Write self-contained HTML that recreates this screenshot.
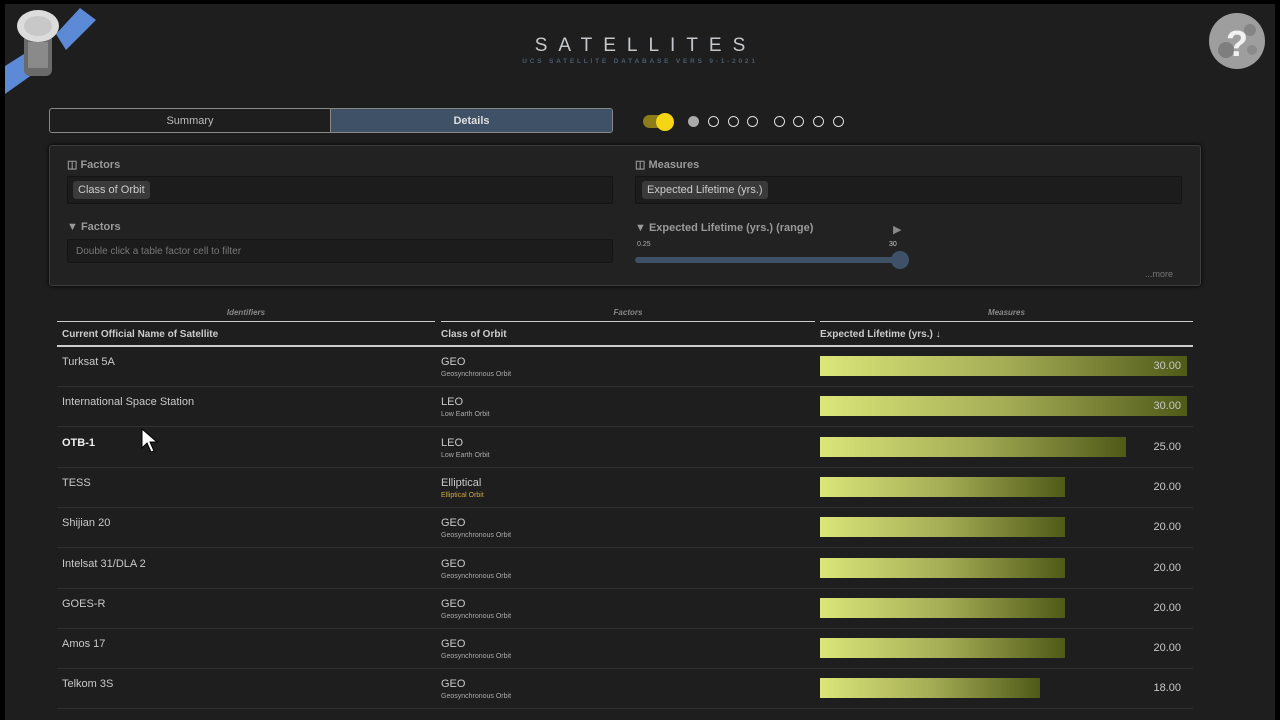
<!DOCTYPE html>
<html><head><meta charset="utf-8"><style>
*{box-sizing:border-box;margin:0;padding:0}
body{width:1280px;height:720px;background:#000;font-family:"Liberation Sans",sans-serif;overflow:hidden;position:relative}
#pg{position:absolute;left:5px;top:4px;width:1270px;height:716px;background:#1e1e1e}
.a{position:absolute}
.t{color:#c9c9c9;font-size:11px}
.pill{background:#3a3a3a;border-radius:3px;padding:3px 5px;color:#ccc;font-size:11px}
.box{border:1px solid #151515;background:#1c1c1c;border-radius:2px}
.lbl{color:#9a9a9a;font-size:11px;font-weight:bold}
.bar{position:absolute;height:20px;background:linear-gradient(90deg,#dbe67a,#a5ad55 50%,#4f5a18)}
.row{position:absolute;left:52px;width:1136px;height:40px;border-bottom:1px solid #303030}
.dot{position:absolute;width:11px;height:11px;border-radius:50%;border:1.5px solid #ddd;top:116px}
</style></head><body><div id="pg"></div>
<!-- satellite -->
<svg class="a" style="left:4px;top:4px" width="92" height="90"><polygon points="52,30 76,4 92,16 62,46" fill="#5c8ad6"/><polygon points="1,62 20,50 32,68 1,90" fill="#5c8ad6"/><rect x="20" y="30" width="28" height="42" rx="6" fill="#6a6a6a"/><rect x="24" y="38" width="20" height="26" fill="#8a8a8a"/><ellipse cx="34" cy="22" rx="21" ry="16" fill="#dcdcdc"/><ellipse cx="34" cy="22" rx="14" ry="10" fill="#c8c8c8"/></svg>
<!-- moon -->
<svg class="a" style="left:1208px;top:12px" width="58" height="58"><circle cx="29" cy="29" r="28" fill="#9e9e9e"/><circle cx="18" cy="38" r="8" fill="#7e7e7e"/><circle cx="42" cy="18" r="6" fill="#858585"/><circle cx="44" cy="38" r="5" fill="#8a8a8a"/><text x="29" y="44" text-anchor="middle" font-size="36" font-weight="bold" fill="#f2f2f2" font-family="Liberation Sans">?</text></svg>
<div class="a" style="left:0;width:1280px;top:35px;text-align:center;color:#c4c8cc;font-size:19px;letter-spacing:11px;padding-left:11px">SATELLITES</div>
<div class="a" style="left:0;width:1280px;top:58px;text-align:center;color:#4d5a6a;font-size:6.5px;letter-spacing:2.8px;font-weight:bold">UCS SATELLITE DATABASE VERS 9-1-2021</div>
<!-- tabs -->
<div class="a" style="left:49px;top:108px;width:564px;height:25px;border:1px solid #888;border-radius:3px;overflow:hidden;display:flex">
<div style="width:281px;border-right:1px solid #888;text-align:center;line-height:24px;color:#bbb;font-size:11px">Summary</div>
<div style="flex:1;background:#3e5166;text-align:center;line-height:24px;color:#ddd;font-size:11px;font-weight:bold">Details</div></div>
<div class="a" style="left:643px;top:115px;width:28px;height:13px;border-radius:7px;background:#8d7d1a"></div>
<div class="a" style="left:656px;top:113px;width:18px;height:18px;border-radius:50%;background:#f5d514"></div>
<div class="dot" style="left:688px;background:#aaa;border-color:#aaa"></div>
<div class="dot" style="left:708px"></div><div class="dot" style="left:728px"></div><div class="dot" style="left:747px"></div>
<div class="dot" style="left:774px"></div><div class="dot" style="left:793px"></div><div class="dot" style="left:813px"></div><div class="dot" style="left:833px"></div>
<!-- panel -->
<div class="a" style="left:49px;top:145px;width:1152px;height:141px;background:#222;border:1px solid #3d3d3d;border-radius:3px;box-shadow:0 0 4px #000"></div>
<div class="a lbl" style="left:67px;top:158px">&#9707; Factors</div>
<div class="a box" style="left:67px;top:176px;width:546px;height:28px"></div>
<div class="a pill" style="left:73px;top:181px">Class of Orbit</div>
<div class="a lbl" style="left:67px;top:221px">&#9660; Factors</div>
<div class="a box" style="left:67px;top:239px;width:546px;height:24px"></div>
<div class="a" style="left:76px;top:246px;color:#777;font-size:10px">Double click a table factor cell to filter</div>
<div class="a lbl" style="left:635px;top:158px">&#9707; Measures</div>
<div class="a box" style="left:635px;top:176px;width:547px;height:28px"></div>
<div class="a pill" style="left:642px;top:181px">Expected Lifetime (yrs.)</div>
<div class="a lbl" style="left:635px;top:222px">&#9660; Expected Lifetime (yrs.) (range)</div>
<div class="a" style="left:893px;top:223px;color:#888;font-size:11px">&#9654;</div>
<div class="a" style="left:637px;top:241px;color:#aaa;font-size:7px">0.25</div>
<div class="a" style="left:889px;top:241px;color:#ccc;font-size:7px">30</div>
<div class="a" style="left:635px;top:257px;width:266px;height:6px;border-radius:3px;background:#3e5166"></div>
<div class="a" style="left:891px;top:251px;width:18px;height:18px;border-radius:50%;background:#3e5166"></div>
<div class="a" style="left:1145px;top:269px;color:#777;font-size:9px">...more</div>
<!-- table headers -->
<div class="a" style="left:57px;top:308px;width:378px;text-align:center;color:#888;font-size:8px;font-style:italic;font-weight:bold">Identifiers</div>
<div class="a" style="left:441px;top:308px;width:374px;text-align:center;color:#888;font-size:8px;font-style:italic;font-weight:bold">Factors</div>
<div class="a" style="left:820px;top:308px;width:373px;text-align:center;color:#888;font-size:8px;font-style:italic;font-weight:bold">Measures</div>
<div class="a" style="left:57px;top:321px;width:378px;height:1px;background:#ccc"></div>
<div class="a" style="left:441px;top:321px;width:374px;height:1px;background:#ccc"></div>
<div class="a" style="left:820px;top:321px;width:373px;height:1px;background:#ccc"></div>
<div class="a" style="left:62px;top:329px;color:#ccc;font-size:10px;font-weight:bold">Current Official Name of Satellite</div>
<div class="a" style="left:441px;top:329px;color:#ccc;font-size:10px;font-weight:bold">Class of Orbit</div>
<div class="a" style="left:820px;top:329px;color:#ccc;font-size:10px;font-weight:bold">Expected Lifetime (yrs.) ↓</div>
<div class="a" style="left:57px;top:345px;width:1136px;height:2px;background:#ccc"></div>
<div id="rows"></div>
<script>
var d=[["Turksat 5A","GEO","Geosynchronous Orbit",30],["International Space Station","LEO","Low Earth Orbit",30],["OTB-1","LEO","Low Earth Orbit",25],["TESS","Elliptical","Elliptical Orbit",20],["Shijian 20","GEO","Geosynchronous Orbit",20],["Intelsat 31/DLA 2","GEO","Geosynchronous Orbit",20],["GOES-R","GEO","Geosynchronous Orbit",20],["Amos 17","GEO","Geosynchronous Orbit",20],["Telkom 3S","GEO","Geosynchronous Orbit",18]];
var h="";d.forEach(function(r,i){var y=347+i*40.3;var w=Math.round(r[3]/30*367);
h+='<div class="row" style="top:'+y+'px;left:57px"></div>';
h+='<div class="a t" style="left:62px;top:'+(y+9)+'px;'+(i==2?'color:#eee;font-weight:bold':'')+'">'+r[0]+'</div>';
h+='<div class="a t" style="left:441px;top:'+(y+9)+'px">'+r[1]+'</div>';
h+='<div class="a" style="left:441px;top:'+(y+24)+'px;color:'+(i==3?'#c9a84a':'#aaa')+';font-size:7px">'+r[2]+'</div>';
h+='<div class="bar" style="left:820px;top:'+(y+9)+'px;width:'+w+'px"></div>';
h+='<div class="a t" style="left:1100px;width:81px;text-align:right;top:'+(y+13)+'px">'+r[3].toFixed(2)+'</div>';});
document.getElementById("rows").innerHTML=h;
</script>
<svg class="a" style="left:141px;top:428px" width="18" height="26"><path d="M1,1 L1,20 L6,15 L10,24 L13,23 L9,14 L16,14 Z" fill="#fff" stroke="#000"/></svg>
</body></html>
